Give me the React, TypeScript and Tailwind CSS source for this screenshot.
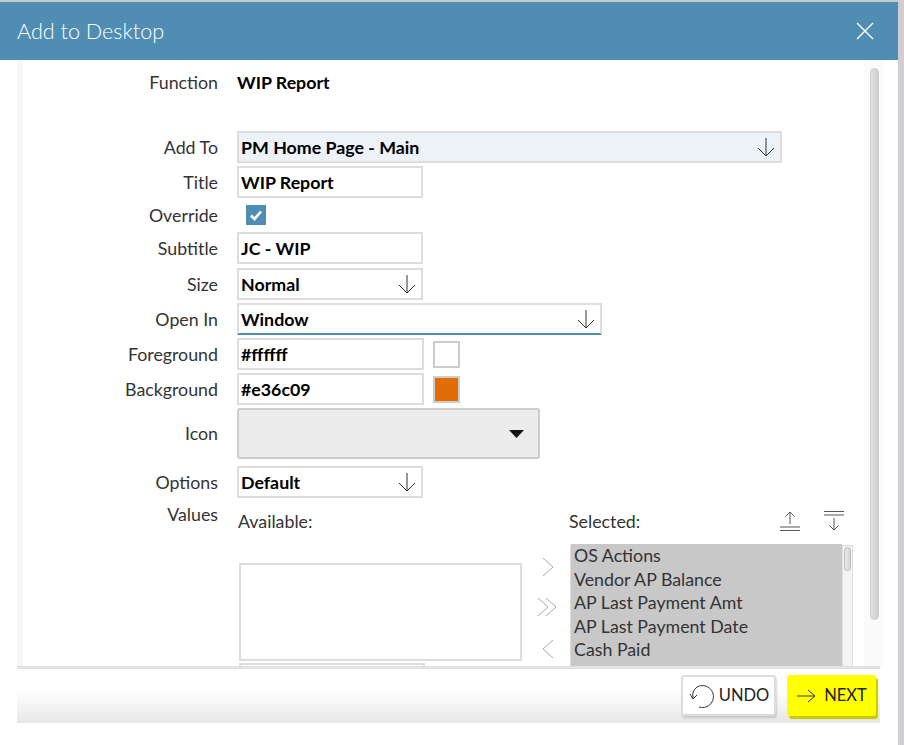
import React from 'react'

const font = { fontFamily: 'Lato, "Open Sans", Arial, sans-serif' }

function DownArrow() {
  return (
    <svg width="18" height="20" viewBox="0 0 18 20" className="shrink-0">
      <path d="M9 1 V19 M1 11 L9 19 L17 11" fill="none" stroke="#333" strokeWidth="1" />
    </svg>
  )
}

function Chevron({ dir, double }: { dir: 'right' | 'left'; double?: boolean }) {
  const d = dir === 'right' ? 'M2 1 L12 10 L2 19' : 'M12 1 L2 10 L12 19'
  return (
    <svg width={double ? 24 : 14} height="20" viewBox={double ? '0 0 24 20' : '0 0 14 20'}>
      <path d={d} fill="none" stroke="#aaa" strokeWidth="1" />
      {double && <path d="M10 1 L20 10 L10 19" fill="none" stroke="#aaa" strokeWidth="1" />}
    </svg>
  )
}

function Row({ label, h = 'h-[32px]', mt, children }: { label: string; h?: string; mt: string; children?: React.ReactNode }) {
  return (
    <div className={`flex items-center ${h} ${mt}`}>
      <div className="w-[195px] text-right text-[17.8px] text-[#333]">{label}</div>
      <div className="ml-[19px] flex items-center">{children}</div>
    </div>
  )
}

function Field({ value, w = 'w-[186px]', arrow, bg = 'bg-white', extra = '' }: { value: string; w?: string; arrow?: boolean; bg?: string; extra?: string }) {
  return (
    <div className={`${w} h-[32px] border-2 border-[#dddddd] ${bg} ${extra} flex items-center justify-between pl-[2px] pr-[5px]`}>
      <span className="text-[17.8px] font-bold text-black">{value}</span>
      {arrow && <DownArrow />}
    </div>
  )
}

const selected = ['OS Actions', 'Vendor AP Balance', 'AP Last Payment Amt', 'AP Last Payment Date', 'Cash Paid']

export default function App() {
  return (
    <div className="w-[904px] h-[745px] flex overflow-hidden bg-white" style={font}>
      <div className="flex-1 flex flex-col border-t-2 border-[#c9c9c9]">
        {/* Header */}
        <div className="h-[58px] bg-[#4f8db3] flex items-center justify-between pl-[17px] pr-[24px]">
          <span className="text-white text-[21.6px] font-light">Add to Desktop</span>
          <svg width="18" height="18" viewBox="0 0 18 18">
            <path d="M1 1 L17 17 M17 1 L1 17" stroke="white" strokeWidth="1.4" />
          </svg>
        </div>

        {/* Scroll region */}
        <div className="h-[606px] ml-[17px] mr-[14px] flex overflow-hidden">
          <div className="flex-1 border-l-[6px] border-[#f7f7f7] overflow-hidden">
            <Row label="Function" mt="mt-[6px]">
              <span className="text-[17.8px] font-bold text-black">WIP Report</span>
            </Row>
            <Row label="Add To" mt="mt-[33px]">
              <Field value="PM Home Page - Main" w="w-[545px]" arrow bg="bg-[#edf2f9]" />
            </Row>
            <Row label="Title" mt="mt-[3px]">
              <Field value="WIP Report" />
            </Row>
            <Row label="Override" h="h-[28px]" mt="mt-[3px]">
              <div className="ml-[9px] w-[20px] h-[20px] bg-[#4f8db3] flex items-center justify-center">
                <svg width="14" height="12" viewBox="0 0 14 12">
                  <path d="M2 6.5 L5.5 10 L12 2.5" fill="none" stroke="white" strokeWidth="2.6" />
                </svg>
              </div>
            </Row>
            <Row label="Subtitle" mt="mt-[3px]">
              <Field value="JC - WIP" />
            </Row>
            <Row label="Size" mt="mt-[4px]">
              <Field value="Normal" arrow />
            </Row>
            <Row label="Open In" mt="mt-[3px]">
              <Field value="Window" w="w-[365px]" arrow extra="border-b-[#4f8db3]" />
            </Row>
            <Row label="Foreground" mt="mt-[3px]">
              <Field value="#ffffff" w="w-[187px]" />
              <div className="ml-[9px] w-[27px] h-[27px] border-2 border-[#cccccc] bg-white" />
            </Row>
            <Row label="Background" mt="mt-[3px]">
              <Field value="#e36c09" w="w-[187px]" />
              <div className="ml-[9px] w-[27px] h-[27px] border-2 border-[#cccccc] bg-[#e36c09]" />
            </Row>
            <Row label="Icon" h="h-[51px]" mt="mt-[3px]">
              <div className="w-[303px] h-[51px] bg-[#ececec] border-2 border-[#cccccc] rounded-[3px] flex items-center justify-end pr-[14px]">
                <svg width="15" height="8" viewBox="0 0 15 8">
                  <path d="M0 0 H15 L7.5 8 Z" fill="#111" />
                </svg>
              </div>
            </Row>
            <Row label="Options" mt="mt-[7px]">
              <Field value="Default" arrow />
            </Row>

            {/* Values */}
            <div className="flex mt-[4px]">
              <div className="w-[195px] text-right text-[17.8px] text-[#333] leading-[24px]">Values</div>
              <div className="ml-[19px] flex pt-[7px]">
                <div className="w-[285px] flex flex-col">
                  <div className="h-[24px] leading-[24px] text-[17.8px] text-[#333] pl-[1px]">Available:</div>
                  <div className="mt-[30px] ml-[2px] w-[283px] h-[98px] border-2 border-[#dddddd]" />
                  <div className="mt-[2px] ml-[2px] w-[186px] h-[30px] border-2 border-[#dddddd]" />
                </div>
                <div className="w-[47px] flex flex-col items-center pl-[4px]">
                  <div className="mt-[48px]"><Chevron dir="right" /></div>
                  <div className="mt-[20px]"><Chevron dir="right" double /></div>
                  <div className="mt-[22px]"><Chevron dir="left" /></div>
                </div>
                <div className="w-[284px] flex flex-col">
                  <div className="h-[24px] flex items-center justify-between">
                    <span className="text-[17.8px] text-[#333]">Selected:</span>
                    <div className="flex items-center gap-[24px] pr-[9px]">
                      <svg width="20" height="22" viewBox="0 0 20 22">
                        <path d="M10 2 V14 M5.5 6.5 L10 2 L14.5 6.5 M0 17 H20 M0 20.5 H20" fill="none" stroke="#555" strokeWidth="1" />
                      </svg>
                      <svg width="20" height="22" viewBox="0 0 20 22">
                        <path d="M0 1.5 H20 M0 5 H20 M10 8 V20 M5.5 15.5 L10 20 L14.5 15.5" fill="none" stroke="#555" strokeWidth="1" />
                      </svg>
                    </div>
                  </div>
                  <div className="mt-[12px] ml-[1px] h-[140px] flex border border-[#dddddd]">
                    <div className="flex-1 bg-[#c8c8c8] pl-[3px] -mt-[2px]">
                      {selected.map((s) => (
                        <div key={s} className="text-[17.8px] leading-[23.5px] text-[#333]">{s}</div>
                      ))}
                    </div>
                    <div className="w-[10px] bg-[#f4f4f4] border-l border-[#e0e0e0] flex justify-center pt-[1px]">
                      <div className="w-[7px] h-[24px] rounded-full border border-[#bbbbbb] bg-gradient-to-r from-[#e8e8e8] to-[#d4d4d4]" />
                    </div>
                  </div>
                </div>
              </div>
            </div>
          </div>
          {/* Scrollbar */}
          <div className="w-[20px] bg-[#fafafa] flex justify-center pt-[8px]">
            <div className="w-[9px] h-[552px] rounded-full bg-gradient-to-r from-[#e4e4e4] via-[#d6d6d6] to-[#cfcfcf] border border-[#cccccc]" />
          </div>
        </div>

        {/* Footer */}
        <div className="ml-[17px] w-[863px] border-t-[3px] border-double border-[#dedede] h-[57px] bg-gradient-to-b from-white from-40% to-[#e6e6e6] flex items-start justify-end gap-[11px] pt-[6px] pr-[4px]">
          <button className="w-[95px] h-[41px] bg-white border-2 border-[#dddddd] rounded-[3px] shadow-[1px_2px_2px_rgba(0,0,0,0.15)] flex items-center justify-center gap-[1px] text-[16.5px] text-[#222]">
            <svg width="30" height="30" viewBox="0 0 30 30">
              <path d="M9 6 A11 11 0 1 1 11 26" fill="none" stroke="#333" strokeWidth="1" />
              <path d="M9 6 A11 11 0 0 0 5 17 M2 13 L5 18 L9 14" fill="none" stroke="#333" strokeWidth="1" />
            </svg>
            UNDO
          </button>
          <button className="w-[89px] h-[41px] bg-[#ffff00] rounded-[3px] shadow-[2px_3px_1px_#c8c800] flex items-center justify-center gap-[8px] text-[16.5px] text-[#222]">
            <svg width="20" height="14" viewBox="0 0 20 14">
              <path d="M1 7 H19 M12 1 L19 7 L12 13" fill="none" stroke="#333" strokeWidth="1" />
            </svg>
            NEXT
          </button>
        </div>
        <div className="flex-1 bg-white" />
      </div>
      <div className="w-[6px] bg-[#cfcfd3]" />
    </div>
  )
}
